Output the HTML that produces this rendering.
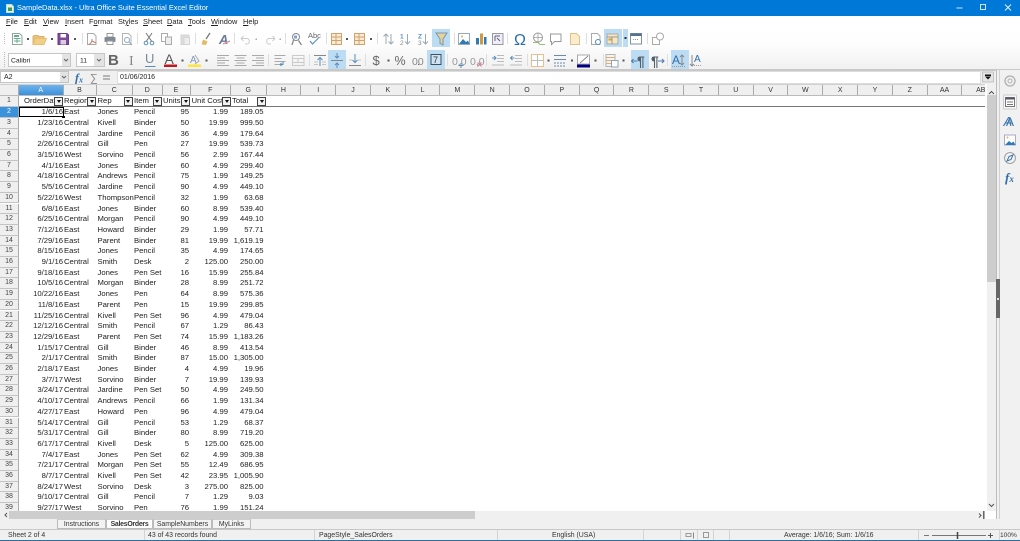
<!DOCTYPE html>
<html><head><meta charset="utf-8"><title>SampleData.xlsx</title>
<style>
*{box-sizing:border-box}
html,body{margin:0;padding:0;width:1020px;height:541px;overflow:hidden;background:#fff;font-family:"Liberation Sans",sans-serif;color:#222}
body{filter:blur(.35px)}
.a{position:absolute}
#title{left:0;top:0;width:1020px;height:16px;background:#0078d7;color:#fff;font-size:7.4px;line-height:15px;padding-left:17px}
#menu{left:0;top:16px;width:1020px;height:12px;background:#fff;font-size:7.4px;line-height:12px}
#menu span{position:absolute;top:0}
#tb{left:0;top:28px;width:1020px;height:42px;background:linear-gradient(#fff,#fdfdfd 40%,#f0f0f0)}
#tbline{left:0;top:69px;width:1020px;height:2px;background:#c8c8c8}
#fb{left:0;top:71px;width:1020px;height:13px;background:#f0f0f0;font-size:7px;line-height:13px}
.box{position:absolute;background:#fff;border:1px solid #c4c4c4}
#heads{left:0;top:84px;width:985px;height:11.5px;display:flex;background:#efefef;border-top:1px solid #d0d0d0;border-bottom:1px solid #bbb;font-size:7px;line-height:11.5px;color:#333;text-align:center}
#heads span{display:block;width:34.8px;flex:none;border-right:1px solid #aaa}
#grid{left:0;top:95.5px;width:987px;height:415px;overflow:hidden;background:#fff}
#rows{position:absolute;left:0;top:1px;width:987px;height:415px}
.r{position:absolute;left:0;width:270px;height:10.7px;font-size:7.7px;line-height:10.4px;color:#222;white-space:nowrap}
.r b{position:absolute;left:0;width:19px;height:10.7px;background:#efefef;border-right:1px solid #aaa;border-bottom:1px solid #c4c4c4;text-align:center;font-weight:normal;font-size:7px;color:#444}
.h b{height:11.7px}
.r i,.r u,.r s,.r em,.r q,.r var,.r tt{position:absolute;font-style:normal;text-decoration:none;font-family:inherit;font-size:7.7px;quotes:none}
.r i{right:207px}
.r u{left:64px}
.r s{left:97.5px}
.r em{left:134px}
.r q{right:81px}
.r var{right:42px}
.r tt{right:6.5px}
.r q:before,.r q:after{content:none}
.h i,.h u,.h s,.h em,.h q,.h var,.h tt{left:auto;right:auto}
.dd{position:absolute;top:1px;width:9px;height:9px;background:#f2f2f2;border:1px solid #444}
.dd:after{content:"";position:absolute;left:1.5px;top:2.5px;border:2.2px solid transparent;border-top:3px solid #111;border-bottom:0}
#hs{left:0;top:510.5px;width:985px;height:8px;background:#f0f0f0}
#tabs{left:0;top:519px;width:1000px;height:9.5px;background:#f0f0f0;font-size:6.9px;line-height:9px}
.t{position:absolute;top:0;height:9.5px;background:#f3f3f3;border:1px solid #bbb;border-top:1px solid #ccc;text-align:center;color:#333}
#st{left:0;top:528.5px;width:1020px;height:11.5px;background:#f0f0f0;border-top:1px solid #c8c8c8;font-size:6.9px;line-height:11px;color:#333}
#st span{position:absolute;top:0;white-space:nowrap}
#st hr{position:absolute;top:0;margin:0;border:0;width:1px;height:11px;background:#d4d4d4}
#bl{left:0;top:540px;width:1020px;height:1px;background:#2a6ea8}
</style></head><body>

<div id="title" class="a">SampleData.xlsx - Ultra Office Suite Essential Excel Editor</div>
<svg class="a" style="left:0;top:0" width="1020" height="28" fill="none">
<path d="M6.5 4.5h5l2 2v6h-7z" fill="#e4f2e6" stroke="#bfe0c8"/><rect x="8" y="7.5" width="4" height="3.5" fill="#3d9b55"/>
<path d="M956.5 8h6" stroke="#cfe6f8"/><rect x="980.5" y="4.5" width="5" height="5" stroke="#cfe6f8"/><path d="M1005 4.5l6 6m0-6l-6 6" stroke="#e8f3fc"/>
<path d="M1012 19.5l4.500 4.500m0-4.500l-4.500 4.500" stroke="#999" stroke-width=".8"/>
</svg>
<div id="menu" class="a">
<span style="left:6px"><span style="position:static;text-decoration:underline">F</span>ile</span>
<span style="left:24px"><span style="position:static;text-decoration:underline">E</span>dit</span>
<span style="left:43px"><span style="position:static;text-decoration:underline">V</span>iew</span>
<span style="left:65px"><span style="position:static;text-decoration:underline">I</span>nsert</span>
<span style="left:89px">F<span style="position:static;text-decoration:underline">o</span>rmat</span>
<span style="left:118px">St<span style="position:static;text-decoration:underline">y</span>les</span>
<span style="left:143px"><span style="position:static;text-decoration:underline">S</span>heet</span>
<span style="left:167px"><span style="position:static;text-decoration:underline">D</span>ata</span>
<span style="left:188px"><span style="position:static;text-decoration:underline">T</span>ools</span>
<span style="left:211px"><span style="position:static;text-decoration:underline">W</span>indow</span>
<span style="left:243px"><span style="position:static;text-decoration:underline">H</span>elp</span>
</div>
<div id="tb" class="a"></div>
<div id="tbline" class="a"></div>

<!-- toolbar icons -->
<svg class="a" style="left:0;top:28px" width="1020" height="42" fill="none" stroke-width="1" font-family="Liberation Sans">
<g transform="translate(0,-28)">
<!-- highlights -->
<rect x="432" y="29" width="18" height="18" fill="#bcdcf4"/>
<rect x="604" y="29" width="18" height="18" fill="#bcdcf4"/><rect x="623" y="29" width="5" height="18" fill="#bcdcf4"/>
<rect x="328" y="50" width="18" height="19" fill="#bcdcf4"/>
<rect x="427" y="50" width="18" height="19" fill="#bcdcf4"/>
<rect x="631" y="50" width="18" height="19" fill="#bcdcf4"/>
<rect x="671" y="50" width="18" height="19" fill="#bcdcf4"/>
<!-- grips -->
<path d="M4.500 33v11M4.500 52v15" stroke="#bbb" stroke-dasharray="1 1"/>
<!-- new sheet -->
<path d="M12.500 33.500h7l2.500 2.500v8.500h-9.500z" fill="#fff" stroke="#8fa89a"/><rect x="14" y="35" width="5" height="2" fill="#6aaa8c"/><path d="M14 38.500h6.500M14 41h6.500M17 38v5" stroke="#6aaa8c"/>
<!-- open -->
<path d="M33 44v-7.500l1-1h4l1 1h5v2" fill="#e8c27c" stroke="#ddb36a"/><path d="M33 44.500l2.500-6h11l-2.500 6z" fill="#f2cf88" stroke="#e8bf72"/>
<!-- save -->
<path d="M58 33.500h9l1.500 1.500v9.500h-10.500z" fill="#7d4a9a" stroke="#6c3a8c"/><rect x="60.500" y="34" width="5.500" height="3.500" fill="#fff"/><rect x="60.500" y="40" width="5.500" height="4.500" fill="#d9cbe2"/>
<!-- pdf doc -->
<path d="M87.500 33.500h6l2.500 2.500v8.500h-8.500z" fill="#fff" stroke="#aaa"/><path d="M92 39c0 3-1.500 5-3.500 5.500M92 41l4 2" stroke="#d07a6c"/>
<!-- print -->
<rect x="107" y="33.500" width="6" height="3.500" fill="#fff" stroke="#999"/><rect x="104.500" y="37" width="11" height="5" rx="1" fill="#7f8a95"/><rect x="107" y="41" width="6" height="3.500" fill="#fff" stroke="#999"/>
<!-- preview -->
<path d="M122.500 33.500h6l2.500 2.500v8.500h-8.500z" fill="#fff" stroke="#b4b4b4"/><circle cx="127" cy="40" r="2.500" stroke="#8aa8c4"/><path d="M129 42l3 3" stroke="#8aa8c4"/>
<!-- cut -->
<path d="M146 33l5.500 8M152 33l-5.500 8" stroke="#777"/><circle cx="146" cy="43" r="1.800" stroke="#5a8dbc"/><circle cx="152" cy="43" r="1.800" stroke="#5a8dbc"/>
<!-- copy -->
<rect x="161.500" y="33.500" width="6" height="8" fill="#fff" stroke="#aaa"/><rect x="165.500" y="37" width="6" height="7.500" fill="#eee" stroke="#aaa"/>
<!-- paste grey -->
<rect x="181" y="35" width="8" height="9.500" fill="#ddd" stroke="#d4d4d4"/><rect x="184" y="37.500" width="5.500" height="7" fill="#eee" stroke="#d4d4d4"/>
<!-- clone -->
<path d="M210 33l-4 6" stroke="#777" stroke-width="1.300"/><path d="M201.500 44.500l1.500-5 4.500 2-1.500 3.500z" fill="#e4bb66"/>
<!-- clear A -->
<text x="219" y="44" font-size="13" font-style="italic" fill="#6b7c96" font-weight="bold">A</text><path d="M223 44l7-3" stroke="#dc94a4" stroke-width="1.400"/>
<!-- undo redo -->
<path d="M241 38.500h6c3 0 3 5.500 0 5.500h-2M241 38.500l2.500-2.500M241 38.500l2.500 2.500" stroke="#cbcbcb"/>
<path d="M275 38.500h-6c-3 0-3 5.500 0 5.500h2M275 38.500l-2.500-2.500M275 38.500l-2.500 2.500" stroke="#cbcbcb"/>
<!-- find -->
<circle cx="296" cy="37" r="3.500" stroke="#888"/><path d="M293.500 40l-1.500 5M298.500 40.500l3 4.500" stroke="#888" stroke-width="1.300"/><rect x="294" y="35.500" width="3" height="3" fill="#7aa6d2"/>
<!-- spell -->
<text x="308" y="38" font-size="7.500" fill="#666">Abc</text><path d="M310 41l2.500 3 6-6" stroke="#5a8dbc" stroke-width="1.100"/>
<!-- row/col -->
<g stroke="#d2a26a"><rect x="331.500" y="33.500" width="10" height="11" fill="#f9ebd6"/><path d="M331.500 37h10M331.500 40.500h10M336 33.500v11"/></g>
<g stroke="#d2a26a"><rect x="354.500" y="33.500" width="10" height="11" fill="#f9ebd6"/><path d="M354.500 37h10M354.500 40.500h10M359 33.500v11"/></g>
<!-- sort -->
<path d="M386 44v-10M383.500 36.500l2.500-2.500 2.500 2.500M391 34v10M388.500 41.500l2.500 2.500 2.500-2.500" stroke="#9aa8b4"/>
<text x="400" y="38.500" font-size="6.500" fill="#5a8dbc" font-weight="bold">1</text><text x="400" y="45" font-size="6.500" fill="#8a8a8a">2</text><path d="M407.500 34v10M405 41.500l2.500 2.500 2.500-2.500" stroke="#9aa8b4"/>
<text x="418" y="38.500" font-size="6.500" fill="#5a8dbc" font-weight="bold">Z</text><text x="418" y="45" font-size="6.500" fill="#8a8a8a">3</text><path d="M425.500 34v10M423 41.500l2.500 2.500 2.500-2.500" stroke="#9aa8b4"/>
<!-- filter -->
<path d="M436 33h11l-4 6v6l-3-1.500v-4.500z" fill="#e4d49a" stroke="#7c96aa"/>
<!-- image, chart, pivot -->
<rect x="458.500" y="33.500" width="11" height="11" fill="#fff" stroke="#9ab"/><path d="M459 44l4-5 3 3 2-1.500 1.500 3.500z" fill="#2f79b4"/><circle cx="462" cy="36.500" r="1" fill="#e0b050"/>
<path d="M476 38h3v6.500h-3z" fill="#2f79b4"/><path d="M480 33.500h3v11h-3z" fill="#d09a45"/><path d="M484 37h2.500v7.500h-2.500z" fill="#2f79b4"/>
<rect x="492.500" y="33.500" width="10.500" height="11" fill="#eef" stroke="#999"/><path d="M495 36h5M495 36v5M500 41l-3-3" stroke="#666"/>
<!-- omega, link, comment, note -->
<text x="514" y="45" font-size="16" fill="#2b6ea8">Ω</text>
<circle cx="538" cy="37.500" r="4.500" stroke="#999"/><path d="M533.500 37.500h9M538 33v9" stroke="#999" stroke-width=".7"/><path d="M533 42.500h5l2 2h5" stroke="#76a03a" stroke-opacity=".7"/>
<path d="M550.500 34h10.500v7.500h-6.500l-3 3v-3h-1z" fill="#fff" stroke="#999"/>
<path d="M570.500 33.500h6l3 3v8h-9z" fill="#fbeccc" stroke="#dfc08c"/>
<!-- header, print area, freeze, shapes -->
<path d="M591.500 33.500h6l2.500 2.500v8.500h-8.500z" fill="#fff" stroke="#aaa"/><circle cx="598" cy="42" r="2.500" fill="#fff" stroke="#5a8dbc" stroke-width="1.100"/>
<rect x="607" y="34" width="11" height="10" fill="#f5e7c0" stroke="#aaa"/><path d="M607 37h11M612 37v7" stroke="#999"/><rect x="608.500" y="38.500" width="3" height="2" fill="#d8a23f"/>
<rect x="630.500" y="33.500" width="11" height="10.500" fill="#fff" stroke="#7d90a4"/><rect x="630.500" y="33.500" width="11" height="2.500" fill="#54728f"/><path d="M633 39.500h6" stroke="#999" stroke-dasharray="1 1"/>
<rect x="652.500" y="37.500" width="7" height="7" stroke="#aaa"/><circle cx="660" cy="36.500" r="3.500" fill="#fff" stroke="#aaa"/>
<!-- dots -->
<g fill="#555"><rect x="27" y="38" width="2" height="2"/><rect x="51" y="38" width="2" height="2"/><rect x="74" y="38" width="2" height="2"/><rect x="346" y="38" width="2" height="2"/><rect x="370" y="38" width="2" height="2"/><rect x="624.500" y="37" width="2" height="2" fill="#234"/>
<rect x="181.500" y="59.500" width="2" height="2"/><rect x="205.500" y="59.500" width="2" height="2"/><rect x="387.500" y="59.500" width="2" height="2"/><rect x="547.500" y="59.500" width="2" height="2"/><rect x="571" y="59.500" width="2" height="2"/><rect x="594.500" y="59.500" width="2" height="2"/><rect x="622.500" y="59.500" width="2" height="2"/></g>
<g fill="#aaa"><rect x="255.500" y="38.500" width="1.500" height="1.500"/><rect x="279.500" y="38.500" width="1.500" height="1.500"/></g>
<!-- separators top -->
<path d="M82.500 33v11M137.500 33v11M195.500 33v11M234.500 33v11M285.500 33v11M326.500 33v11M377.500 33v11M454.500 33v11M507.500 33v11M586.500 33v11M647.500 33v11" stroke="#dedede"/>
<!-- font box -->
<rect x="8.500" y="53.500" width="62" height="13" fill="#fff" stroke="#c6c6c6"/><rect x="62" y="54" width="8" height="12" fill="#e3e3e3"/><path d="M64 59l2 2 2-2" stroke="#666"/>
<text x="11" y="62.500" font-size="6.800" fill="#222">Calibri</text>
<rect x="76.500" y="53.500" width="28" height="13" fill="#fff" stroke="#c6c6c6"/><rect x="94" y="54" width="10" height="12" fill="#e3e3e3"/><path d="M97 59l2 2 2-2" stroke="#666"/>
<text x="80" y="62.500" font-size="6.800" fill="#222">11</text>
<!-- B I U -->
<text x="108" y="65" font-size="15" font-weight="bold" fill="#666">B</text>
<text x="129" y="65" font-size="14" fill="#888" font-family="Liberation Serif">I</text>
<text x="145" y="63" font-size="13" fill="#7a8a9a">U</text><path d="M145 66.500h10.500" stroke="#5a8dbc"/>
<!-- font color -->
<text x="164.500" y="64" font-size="14" fill="#555">A</text><rect x="164" y="64.500" width="13" height="2.500" fill="#c0181f"/>
<text x="190" y="63" font-size="10" fill="#7a9ab8">A</text><path d="M195 55l4 6-4 3" stroke="#aaa"/><rect x="188" y="64.500" width="13" height="2.500" fill="#ffe53b"/>
<!-- aligns -->
<g stroke="#aaa"><path d="M217 55.500h12M217 58h8M217 60.500h12M217 63h8M217 65.500h12"/><path d="M234.500 55.500h12M236.500 58h8M234.500 60.500h12M236.500 63h8M234.500 65.500h12"/><path d="M252 55.500h12M256 58h8M252 60.500h12M256 63h8M252 65.500h12"/></g>
<path d="M268.500 54v12M309.500 54v12M365.500 54v12M447.500 54v12M486.500 54v12M527.500 54v12M603.500 54v12M667.500 54v12" stroke="#dedede"/>
<path d="M274.500 55.500h11M274.500 58.500h7M274.500 61.500h11M274.500 64.500h6" stroke="#aaa"/><path d="M283 61.500v3h-3M280 64.500l1.500-1.500M280 64.500l1.500 1.500" stroke="#5a8dbc"/>
<rect x="292.500" y="55.500" width="11.500" height="10" stroke="#cbcbcb"/><path d="M292.500 58.500h11.500M292.500 62.500h11.500M298 58.500v4" stroke="#cbcbcb"/>
<!-- vertical align -->
<path d="M314 55.500h12" stroke="#888"/><path d="M320 66v-8M317.500 60l2.500-2.500 2.500 2.500" stroke="#5a8dbc"/><path d="M314 62h4M322 62h4M314 64.500h4M322 64.500h4" stroke="#c4c4c4"/>
<path d="M331 60.500h12" stroke="#888"/><path d="M337 53v5M337 68v-5M335 56l2 2 2-2M335 65l2-2 2 2" stroke="#5a8dbc"/>
<path d="M349 65.500h12" stroke="#888"/><path d="M355 54v8M352.500 60l2.500 2.500 2.500-2.500" stroke="#5a8dbc"/><path d="M349 60h3M358 60h3" stroke="#c4c4c4"/>
<!-- number formats -->
<text x="372.500" y="65" font-size="13" fill="#666">$</text>
<text x="394.500" y="65" font-size="12.500" fill="#666">%</text>
<text x="412" y="65" font-size="10.500" fill="#888">00</text><rect x="418" y="64" width="1" height="1" fill="#666"/>
<rect x="431" y="54.500" width="10" height="10" fill="#cfe3f3" stroke="#3f4f5f"/><text x="433" y="63" font-size="9" fill="#333">7</text>
<text x="452" y="65" font-size="10.500" fill="#999">0,0</text><path d="M461 63v5M458.500 65.500h5" stroke="#5a8dbc"/>
<text x="470" y="65" font-size="10.500" fill="#999">0,0</text><path d="M477.500 62.500l4 4m0-4l-4 4" stroke="#dc7a8a"/>
<!-- indent -->
<path d="M497 55.500h7M497 58.500h7M497 61.500h7M492 65h12" stroke="#bbb"/><path d="M492 58h4M494 56l2 2-2 2" stroke="#5a8dbc"/>
<path d="M515 55.500h7M515 58.500h7M515 61.500h7M510 65h12" stroke="#bbb"/><path d="M510.500 58h4M512.500 56l-2 2 2 2" stroke="#5a8dbc"/>
<!-- borders -->
<rect x="531.500" y="54.500" width="12" height="12" fill="#fff" stroke="#e8c088"/><path d="M531.500 60.500h12M537.500 54.500v12" stroke="#bdbdbd"/>
<path d="M554 55.500h12M554 59.500h12" stroke="#6a8aaa"/><path d="M554 63h12M554 66h12" stroke="#6a8aaa" stroke-dasharray="2 1"/>
<path d="M577.500 55v9h12v-9z" fill="#fff" stroke="#aaa"/><path d="M580 63l8-7" stroke="#888"/><rect x="577" y="64.500" width="13" height="3" fill="#000080"/>
<!-- conditional -->
<rect x="606" y="54.500" width="9" height="12" fill="#f4f4f4" stroke="#b4b4b4"/><path d="M606 57.500h9M606 60.500h9M606 63.500h9" stroke="#dcae72"/><rect x="611.500" y="60.500" width="6.500" height="6.500" fill="#fff" stroke="#8fa4b6"/>
<!-- paragraph directions -->
<text x="637" y="66" font-size="14" font-weight="bold" fill="#52616e">¶</text><path d="M631.500 61h6M633.500 59l-2 2 2 2" stroke="#4f7fad" stroke-width="1.100"/>
<text x="651" y="66" font-size="14" font-weight="bold" fill="#52616e">¶</text><path d="M658 61h6M662 59l2 2-2 2" stroke="#4f7fad" stroke-width="1.100"/>
<!-- Text direction -->
<text x="672" y="64" font-size="12" fill="#2f6fa8">A</text><path d="M682 55v10M680 57l2-2 2 2M680 63l2 2 2-2" stroke="#888"/><path d="M672 66.500h14" stroke="#999" stroke-dasharray="1 1"/>
<text x="694" y="62" font-size="10" fill="#2f6fa8">A</text><path d="M692 55v11M690 64l2 2 2-2" stroke="#888"/><path d="M694 65.500h8" stroke="#999" stroke-dasharray="1 1"/>
</g>
</svg>

<!-- formula bar -->
<div id="fb" class="a">
<div class="box" style="left:0;top:0;width:69px;height:12px;padding-left:3px;line-height:11px">A2</div>
<div class="a" style="left:60px;top:1px;width:8px;height:10px;background:#e3e3e3"></div>
<div class="box" style="left:117px;top:0;width:864px;height:12.5px;padding-left:2px;line-height:11px;border-color:#ddd">01/06/2016</div>
<svg class="a" style="left:0;top:0" width="1020" height="13" fill="none">
<path d="M62 5l2 2 2-2" stroke="#666"/>
<text x="75" y="10.500" font-size="12" font-style="italic" font-family="Liberation Serif" font-weight="bold" fill="#2f6fa8">f<tspan font-size="8" dy="1">x</tspan></text>
<text x="90" y="10.500" font-size="11" fill="#888">∑</text>
<path d="M103 5h7M103 8h7" stroke="#777"/>
<rect x="982.500" y="1" width="11" height="10" fill="#e4e4e4" stroke="#c4c4c4"/><rect x="985" y="3.500" width="6" height="1.500" fill="#111"/><path d="M985 5.500h6l-3 3z" fill="#111"/>
</svg>
</div>

<!-- column headers -->
<div id="heads" class="a">
<span style="width:19px"></span>
<span style="width:44.5px;background:linear-gradient(#6fb3ea,#3a91dc);color:#fff">A</span>
<span style="width:33px">B</span><span style="width:36.500px">C</span><span style="width:29.500px">D</span><span style="width:28px">E</span><span style="width:40.500px">F</span><span style="width:35.500px">G</span>
<span>H</span><span>I</span><span>J</span><span>K</span><span>L</span><span>M</span><span>N</span><span>O</span><span>P</span><span>Q</span><span>R</span><span>S</span><span>T</span><span>U</span><span>V</span><span>W</span><span>X</span><span>Y</span><span>Z</span><span>AA</span><span style="border-right:0;width:23px;text-align:right">AB</span>
</div>

<div id="grid" class="a">
<div class="r h" style="top:0"><b>1</b>
<i style="left:24px">OrderDat</i><u style="left:64px">Region</u><s style="left:97.500px">Rep</s><em style="left:134px">Item</em><q style="left:163px">Units</q><var style="left:191.500px">Unit Cost</var><tt style="left:232px">Total</tt>
<span class="dd" style="left:54px"></span><span class="dd" style="left:87px"></span><span class="dd" style="left:123.500px"></span><span class="dd" style="left:152.500px"></span><span class="dd" style="left:181px"></span><span class="dd" style="left:222px"></span><span class="dd" style="left:257px"></span></div>
<div class="a" style="left:19px;top:10.500px;width:966px;height:1px;background:#777"></div>

<div id="rows">
<div class="r" style="top:10.7px"><b style="background:#3a91dc;color:#fff">2</b><i>1/6/16</i><u>East</u><s>Jones</s><em>Pencil</em><q>95</q><var>1.99</var><tt>189.05</tt></div>
<div class="r" style="top:21.4px"><b>3</b><i>1/23/16</i><u>Central</u><s>Kivell</s><em>Binder</em><q>50</q><var>19.99</var><tt>999.50</tt></div>
<div class="r" style="top:32.1px"><b>4</b><i>2/9/16</i><u>Central</u><s>Jardine</s><em>Pencil</em><q>36</q><var>4.99</var><tt>179.64</tt></div>
<div class="r" style="top:42.8px"><b>5</b><i>2/26/16</i><u>Central</u><s>Gill</s><em>Pen</em><q>27</q><var>19.99</var><tt>539.73</tt></div>
<div class="r" style="top:53.5px"><b>6</b><i>3/15/16</i><u>West</u><s>Sorvino</s><em>Pencil</em><q>56</q><var>2.99</var><tt>167.44</tt></div>
<div class="r" style="top:64.2px"><b>7</b><i>4/1/16</i><u>East</u><s>Jones</s><em>Binder</em><q>60</q><var>4.99</var><tt>299.40</tt></div>
<div class="r" style="top:74.9px"><b>8</b><i>4/18/16</i><u>Central</u><s>Andrews</s><em>Pencil</em><q>75</q><var>1.99</var><tt>149.25</tt></div>
<div class="r" style="top:85.6px"><b>9</b><i>5/5/16</i><u>Central</u><s>Jardine</s><em>Pencil</em><q>90</q><var>4.99</var><tt>449.10</tt></div>
<div class="r" style="top:96.3px"><b>10</b><i>5/22/16</i><u>West</u><s>Thompson</s><em>Pencil</em><q>32</q><var>1.99</var><tt>63.68</tt></div>
<div class="r" style="top:107px"><b>11</b><i>6/8/16</i><u>East</u><s>Jones</s><em>Binder</em><q>60</q><var>8.99</var><tt>539.40</tt></div>
<div class="r" style="top:117.7px"><b>12</b><i>6/25/16</i><u>Central</u><s>Morgan</s><em>Pencil</em><q>90</q><var>4.99</var><tt>449.10</tt></div>
<div class="r" style="top:128.4px"><b>13</b><i>7/12/16</i><u>East</u><s>Howard</s><em>Binder</em><q>29</q><var>1.99</var><tt>57.71</tt></div>
<div class="r" style="top:139.1px"><b>14</b><i>7/29/16</i><u>East</u><s>Parent</s><em>Binder</em><q>81</q><var>19.99</var><tt>1,619.19</tt></div>
<div class="r" style="top:149.8px"><b>15</b><i>8/15/16</i><u>East</u><s>Jones</s><em>Pencil</em><q>35</q><var>4.99</var><tt>174.65</tt></div>
<div class="r" style="top:160.5px"><b>16</b><i>9/1/16</i><u>Central</u><s>Smith</s><em>Desk</em><q>2</q><var>125.00</var><tt>250.00</tt></div>
<div class="r" style="top:171.2px"><b>17</b><i>9/18/16</i><u>East</u><s>Jones</s><em>Pen Set</em><q>16</q><var>15.99</var><tt>255.84</tt></div>
<div class="r" style="top:181.9px"><b>18</b><i>10/5/16</i><u>Central</u><s>Morgan</s><em>Binder</em><q>28</q><var>8.99</var><tt>251.72</tt></div>
<div class="r" style="top:192.6px"><b>19</b><i>10/22/16</i><u>East</u><s>Jones</s><em>Pen</em><q>64</q><var>8.99</var><tt>575.36</tt></div>
<div class="r" style="top:203.3px"><b>20</b><i>11/8/16</i><u>East</u><s>Parent</s><em>Pen</em><q>15</q><var>19.99</var><tt>299.85</tt></div>
<div class="r" style="top:214px"><b>21</b><i>11/25/16</i><u>Central</u><s>Kivell</s><em>Pen Set</em><q>96</q><var>4.99</var><tt>479.04</tt></div>
<div class="r" style="top:224.7px"><b>22</b><i>12/12/16</i><u>Central</u><s>Smith</s><em>Pencil</em><q>67</q><var>1.29</var><tt>86.43</tt></div>
<div class="r" style="top:235.4px"><b>23</b><i>12/29/16</i><u>East</u><s>Parent</s><em>Pen Set</em><q>74</q><var>15.99</var><tt>1,183.26</tt></div>
<div class="r" style="top:246.1px"><b>24</b><i>1/15/17</i><u>Central</u><s>Gill</s><em>Binder</em><q>46</q><var>8.99</var><tt>413.54</tt></div>
<div class="r" style="top:256.8px"><b>25</b><i>2/1/17</i><u>Central</u><s>Smith</s><em>Binder</em><q>87</q><var>15.00</var><tt>1,305.00</tt></div>
<div class="r" style="top:267.5px"><b>26</b><i>2/18/17</i><u>East</u><s>Jones</s><em>Binder</em><q>4</q><var>4.99</var><tt>19.96</tt></div>
<div class="r" style="top:278.2px"><b>27</b><i>3/7/17</i><u>West</u><s>Sorvino</s><em>Binder</em><q>7</q><var>19.99</var><tt>139.93</tt></div>
<div class="r" style="top:288.9px"><b>28</b><i>3/24/17</i><u>Central</u><s>Jardine</s><em>Pen Set</em><q>50</q><var>4.99</var><tt>249.50</tt></div>
<div class="r" style="top:299.6px"><b>29</b><i>4/10/17</i><u>Central</u><s>Andrews</s><em>Pencil</em><q>66</q><var>1.99</var><tt>131.34</tt></div>
<div class="r" style="top:310.3px"><b>30</b><i>4/27/17</i><u>East</u><s>Howard</s><em>Pen</em><q>96</q><var>4.99</var><tt>479.04</tt></div>
<div class="r" style="top:321px"><b>31</b><i>5/14/17</i><u>Central</u><s>Gill</s><em>Pencil</em><q>53</q><var>1.29</var><tt>68.37</tt></div>
<div class="r" style="top:331.7px"><b>32</b><i>5/31/17</i><u>Central</u><s>Gill</s><em>Binder</em><q>80</q><var>8.99</var><tt>719.20</tt></div>
<div class="r" style="top:342.4px"><b>33</b><i>6/17/17</i><u>Central</u><s>Kivell</s><em>Desk</em><q>5</q><var>125.00</var><tt>625.00</tt></div>
<div class="r" style="top:353.1px"><b>34</b><i>7/4/17</i><u>East</u><s>Jones</s><em>Pen Set</em><q>62</q><var>4.99</var><tt>309.38</tt></div>
<div class="r" style="top:363.8px"><b>35</b><i>7/21/17</i><u>Central</u><s>Morgan</s><em>Pen Set</em><q>55</q><var>12.49</var><tt>686.95</tt></div>
<div class="r" style="top:374.5px"><b>36</b><i>8/7/17</i><u>Central</u><s>Kivell</s><em>Pen Set</em><q>42</q><var>23.95</var><tt>1,005.90</tt></div>
<div class="r" style="top:385.2px"><b>37</b><i>8/24/17</i><u>West</u><s>Sorvino</s><em>Desk</em><q>3</q><var>275.00</var><tt>825.00</tt></div>
<div class="r" style="top:395.9px"><b>38</b><i>9/10/17</i><u>Central</u><s>Gill</s><em>Pencil</em><q>7</q><var>1.29</var><tt>9.03</tt></div>
<div class="r" style="top:406.6px"><b>39</b><i>9/27/17</i><u>West</u><s>Sorvino</s><em>Pen</em><q>76</q><var>1.99</var><tt>151.24</tt></div>
</div>
<div class="a" style="left:19px;top:11px;width:45px;height:10.500px;border:1.200px solid #000"></div>
<div class="a" style="left:62px;top:20px;width:2.500px;height:2.500px;background:#000"></div>
</div>

<!-- vertical scrollbar -->
<div class="a" style="left:987px;top:84px;width:9px;height:427px;background:#f0f0f0"></div>
<div class="a" style="left:987px;top:95px;width:9px;height:187px;background:#cdcdcd"></div>
<svg class="a" style="left:985px;top:85px" width="12" height="432" fill="none"><path d="M4 9l2.500-2.500L9 9" stroke="#555"/><path d="M4 419l2.500 2.500L9 419" stroke="#555"/></svg>

<!-- sidebar -->
<div class="a" style="left:996px;top:70px;width:24px;height:459px;background:#f1f1f1;border-left:1px solid #bbb"></div>
<div class="a" style="left:999px;top:70px;width:1px;height:459px;background:#d0d0d0"></div>
<div class="a" style="left:995.500px;top:279px;width:4px;height:39px;background:#666"></div>
<div class="a" style="left:997px;top:298px;width:2px;height:2px;background:#ddd"></div>
<svg class="a" style="left:1000px;top:70px" width="20" height="120" fill="none" font-family="Liberation Sans">
<circle cx="10" cy="11" r="5" stroke="#b0b0b0" stroke-width="1.300"/><circle cx="10" cy="11" r="2" stroke="#b0b0b0"/>
<rect x="3.500" y="25" width="13" height="14" rx="1" stroke="#ccc" fill="#f7f7f7"/><rect x="5.500" y="27.500" width="9" height="9" fill="#fff" stroke="#777"/><rect x="5.500" y="27.500" width="9" height="2" fill="#556"/><path d="M7 32h6M7 34.500h6" stroke="#777"/>
<text x="3.500" y="56" font-size="13" fill="#3c78b0" font-style="italic">A</text><text x="6" y="56" font-size="12" fill="#2f6fa8">A</text>
<rect x="4.500" y="65" width="11" height="10" fill="#fff" stroke="#aac"/><path d="M5 75l4-4 2.500 2 2-1.500 2 3.500z" fill="#2f79b4"/><circle cx="7.500" cy="67.500" r="1" fill="#e0b050"/>
<circle cx="10" cy="88" r="5.500" stroke="#a0a0a0"/><path d="M13 85l-4 1.500-2 4.500 4-1.500z" stroke="#3c78b0"/>
<text x="5" y="112" font-size="13" font-style="italic" font-family="Liberation Serif" font-weight="bold" fill="#2f6fa8">f<tspan font-size="9" dy="0">x</tspan></text>
</svg>

<!-- horizontal scrollbar -->
<div id="hs" class="a"><div class="a" style="left:9px;top:0;width:466px;height:8px;background:#cdcdcd"></div></div>
<svg class="a" style="left:0;top:508px" width="1000" height="22" fill="none">
<path d="M7 5l-2 2 2 2" stroke="#555"/><path d="M979 5.500l2 2-2 2" stroke="#555"/><rect x="983" y="3" width="1.500" height="9" fill="#666"/>
<g stroke="#aaa" fill="#aaa"><path d="M8.500 14.500v4M12 15l-2 1.500 2 1.500zM20 15l-2 1.500 2 1.500zM27 15l2 1.500-2 1.500zM34 15l2 1.500-2 1.500zM38.500 14.500v4"/></g>
<path d="M45 16.500h6M48 13.500v6" stroke="#111" stroke-width="1.300"/>
</svg>
<div id="tabs" class="a">
<div class="t" style="left:57px;width:49px">Instructions</div>
<div class="t" style="left:106px;width:47px;background:#fff;font-weight:bold;letter-spacing:-.25px">SalesOrders</div>
<div class="t" style="left:153px;width:59px">SampleNumbers</div>
<div class="t" style="left:212px;width:39px">MyLinks</div>
</div>

<!-- status -->
<div id="st" class="a">
<span style="left:8px">Sheet 2 of 4</span><hr style="left:144px">
<span style="left:148px">43 of 43 records found</span><hr style="left:314px">
<span style="left:319px">PageStyle_SalesOrders</span><hr style="left:497px">
<span style="left:552px">English (USA)</span><hr style="left:643px"><hr style="left:680px"><hr style="left:697px"><hr style="left:713px"><hr style="left:729px">
<span style="left:784px">Average: 1/6/16; Sum: 1/6/16</span><hr style="left:918px"><hr style="left:999px">
<span style="left:1000px;font-size:6.600px">100%</span>
<svg class="a" style="left:0;top:0" width="1020" height="11" fill="none">
<rect x="686" y="3.500" width="5" height="3" stroke="#999"/><path d="M693.500 2.500v6" stroke="#888"/>
<rect x="703.500" y="2.500" width="5" height="5" stroke="#999"/>
<path d="M924 5.500h5M932 5.500h54" stroke="#777"/><path d="M957.500 2v7" stroke="#444" stroke-width="1.500"/><path d="M988 5.500h5M990.500 3v5" stroke="#555"/>
</svg>
</div>
<div id="bl" class="a"></div>
</body></html>
